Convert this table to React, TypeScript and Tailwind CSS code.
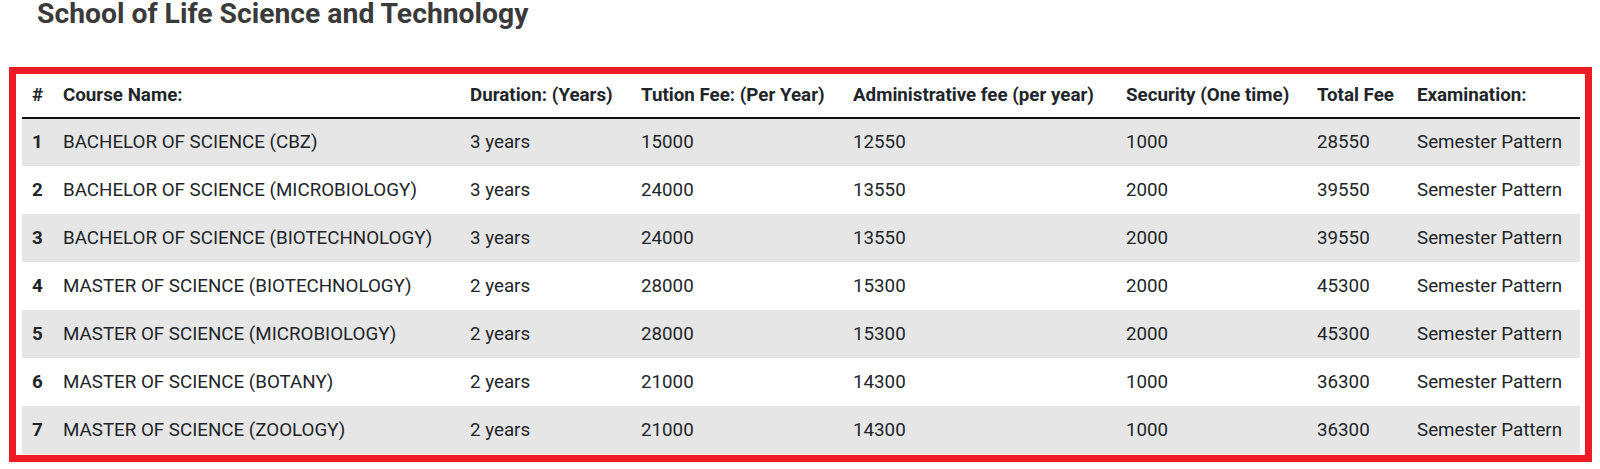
const columns = [
  { label: "#", width: "w-[31px]" },
  { label: "Course Name:", width: "w-[407px]" },
  { label: "Duration: (Years)", width: "w-[171px]" },
  { label: "Tution Fee: (Per Year)", width: "w-[212px]" },
  { label: "Administrative fee (per year)", width: "w-[273px]" },
  { label: "Security (One time)", width: "w-[191px]" },
  { label: "Total Fee", width: "w-[100px]" },
  { label: "Examination:", width: "w-[173px]" },
];

const courses = [
  ["BACHELOR OF SCIENCE (CBZ)", "3 years", "15000", "12550", "1000", "28550"],
  ["BACHELOR OF SCIENCE (MICROBIOLOGY)", "3 years", "24000", "13550", "2000", "39550"],
  ["BACHELOR OF SCIENCE (BIOTECHNOLOGY)", "3 years", "24000", "13550", "2000", "39550"],
  ["MASTER OF SCIENCE (BIOTECHNOLOGY)", "2 years", "28000", "15300", "2000", "45300"],
  ["MASTER OF SCIENCE (MICROBIOLOGY)", "2 years", "28000", "15300", "2000", "45300"],
  ["MASTER OF SCIENCE (BOTANY)", "2 years", "21000", "14300", "1000", "36300"],
  ["MASTER OF SCIENCE (ZOOLOGY)", "2 years", "21000", "14300", "1000", "36300"],
];

export default function App() {
  return (
    <div className="min-h-screen bg-white font-['Roboto',sans-serif] text-[#212529]">
      <h2 className="pl-[37px] text-[28.3px] leading-[28px] font-bold text-[#3a3a3a]">
        School of Life Science and Technology
      </h2>

      <div className="mt-[39px] ml-[9px] mr-[8px] border-[7px] border-[#ed1c24] pl-[6px] pr-[5px] pb-px">
        <table className="w-full table-fixed border-collapse text-[18.75px]">
          <colgroup>
            {columns.map((c) => (
              <col key={c.label} className={c.width} />
            ))}
          </colgroup>
          <thead>
            <tr className="h-[44px] border-b-2 border-[#111]">
              {columns.map((c) => (
                <th
                  key={c.label}
                  className="px-[10px] text-left font-bold whitespace-nowrap"
                >
                  {c.label}
                </th>
              ))}
            </tr>
          </thead>
          <tbody>
            {courses.map((row, i) => (
              <tr
                key={row[0]}
                className={i % 2 === 0 ? "h-[48px] bg-[#e6e6e6]" : "h-[48px] bg-white"}
              >
                <td className="px-[10px] font-bold">{i + 1}</td>
                {row.map((cell, j) => (
                  <td key={j} className="px-[10px] whitespace-nowrap">
                    {cell}
                  </td>
                ))}
                <td className="px-[10px] whitespace-nowrap">Semester Pattern</td>
              </tr>
            ))}
          </tbody>
        </table>
      </div>
    </div>
  );
}
